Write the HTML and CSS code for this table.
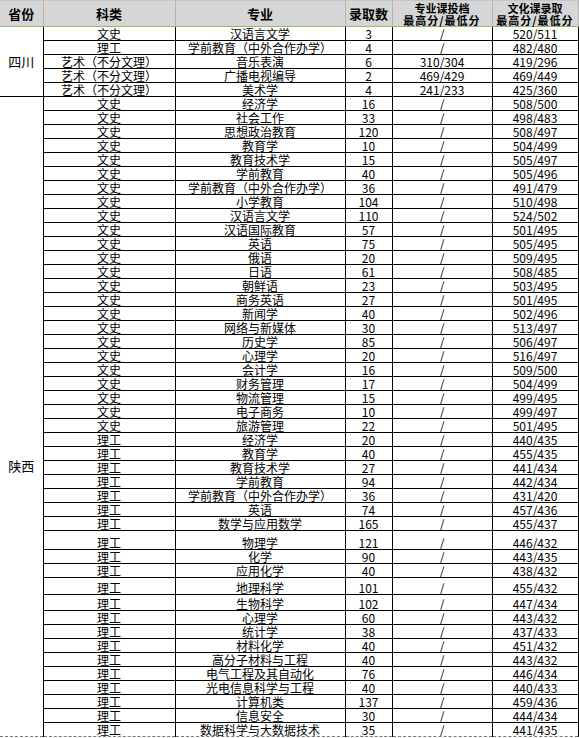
FILE: index.html
```html
<!DOCTYPE html>
<html lang="zh-CN">
<head>
<meta charset="utf-8">
<title>录取分数</title>
<link rel="stylesheet" href="styles.css">
</head>
<body>
<table class="sheet">
<colgroup>
<col class="w-prov"><col class="w-type"><col class="w-major"><col class="w-num"><col class="w-pro"><col class="w-cul">
</colgroup>
<thead>
<tr>
<th>省份</th><th>科类</th><th>专业</th><th>录取数</th>
<th class="two"><span>专业课投档</span><span class="wide">最高分/最低分</span></th>
<th class="two"><span>文化课录取</span><span class="wide">最高分/最低分</span></th>
</tr>
</thead>
<tbody>
<tr><td class="prov" rowspan="5">四川</td><td>文史</td><td>汉语言文学</td><td>3</td><td>/</td><td>520/511</td></tr>
<tr><td>理工</td><td>学前教育（中外合作办学）</td><td>4</td><td>/</td><td>482/480</td></tr>
<tr><td>艺术（不分文理）</td><td>音乐表演</td><td>6</td><td>310/304</td><td>419/296</td></tr>
<tr><td>艺术（不分文理）</td><td>广播电视编导</td><td>2</td><td>469/429</td><td>469/449</td></tr>
<tr><td>艺术（不分文理）</td><td>美术学</td><td>4</td><td>241/233</td><td>425/360</td></tr>
<tr><td class="prov prov-low" rowspan="45">陕西</td><td>文史</td><td>经济学</td><td>16</td><td>/</td><td>508/500</td></tr>
<tr><td>文史</td><td>社会工作</td><td>33</td><td>/</td><td>498/483</td></tr>
<tr><td>文史</td><td>思想政治教育</td><td>120</td><td>/</td><td>508/497</td></tr>
<tr><td>文史</td><td>教育学</td><td>10</td><td>/</td><td>504/499</td></tr>
<tr><td>文史</td><td>教育技术学</td><td>15</td><td>/</td><td>505/497</td></tr>
<tr><td>文史</td><td>学前教育</td><td>40</td><td>/</td><td>505/496</td></tr>
<tr><td>文史</td><td>学前教育（中外合作办学）</td><td>36</td><td>/</td><td>491/479</td></tr>
<tr><td>文史</td><td>小学教育</td><td>104</td><td>/</td><td>510/498</td></tr>
<tr><td>文史</td><td>汉语言文学</td><td>110</td><td>/</td><td>524/502</td></tr>
<tr><td>文史</td><td>汉语国际教育</td><td>57</td><td>/</td><td>501/495</td></tr>
<tr><td>文史</td><td>英语</td><td>75</td><td>/</td><td>505/495</td></tr>
<tr><td>文史</td><td>俄语</td><td>20</td><td>/</td><td>509/495</td></tr>
<tr><td>文史</td><td>日语</td><td>61</td><td>/</td><td>508/485</td></tr>
<tr><td>文史</td><td>朝鲜语</td><td>23</td><td>/</td><td>503/495</td></tr>
<tr><td>文史</td><td>商务英语</td><td>27</td><td>/</td><td>501/495</td></tr>
<tr><td>文史</td><td>新闻学</td><td>40</td><td>/</td><td>502/496</td></tr>
<tr><td>文史</td><td>网络与新媒体</td><td>30</td><td>/</td><td>513/497</td></tr>
<tr><td>文史</td><td>历史学</td><td>85</td><td>/</td><td>506/497</td></tr>
<tr><td>文史</td><td>心理学</td><td>20</td><td>/</td><td>516/497</td></tr>
<tr><td>文史</td><td>会计学</td><td>16</td><td>/</td><td>509/500</td></tr>
<tr><td>文史</td><td>财务管理</td><td>17</td><td>/</td><td>504/499</td></tr>
<tr><td>文史</td><td>物流管理</td><td>15</td><td>/</td><td>499/495</td></tr>
<tr><td>文史</td><td>电子商务</td><td>10</td><td>/</td><td>499/497</td></tr>
<tr><td>文史</td><td>旅游管理</td><td>22</td><td>/</td><td>501/495</td></tr>
<tr><td>理工</td><td>经济学</td><td>20</td><td>/</td><td>440/435</td></tr>
<tr><td>理工</td><td>教育学</td><td>40</td><td>/</td><td>455/435</td></tr>
<tr><td>理工</td><td>教育技术学</td><td>27</td><td>/</td><td>441/434</td></tr>
<tr><td>理工</td><td>学前教育</td><td>94</td><td>/</td><td>442/434</td></tr>
<tr><td>理工</td><td>学前教育（中外合作办学）</td><td>36</td><td>/</td><td>431/420</td></tr>
<tr><td>理工</td><td>英语</td><td>74</td><td>/</td><td>457/436</td></tr>
<tr><td>理工</td><td>数学与应用数学</td><td>165</td><td>/</td><td>455/437</td></tr>
<tr class="tall-a"><td>理工</td><td>物理学</td><td>121</td><td>/</td><td>446/432</td></tr>
<tr><td>理工</td><td>化学</td><td>90</td><td>/</td><td>443/435</td></tr>
<tr><td>理工</td><td>应用化学</td><td>40</td><td>/</td><td>438/432</td></tr>
<tr class="tall-b"><td>理工</td><td>地理科学</td><td>101</td><td>/</td><td>455/432</td></tr>
<tr class="tall-c"><td>理工</td><td>生物科学</td><td>102</td><td>/</td><td>447/434</td></tr>
<tr><td>理工</td><td>心理学</td><td>60</td><td>/</td><td>443/432</td></tr>
<tr><td>理工</td><td>统计学</td><td>38</td><td>/</td><td>437/433</td></tr>
<tr><td>理工</td><td>材料化学</td><td>40</td><td>/</td><td>451/432</td></tr>
<tr><td>理工</td><td>高分子材料与工程</td><td>40</td><td>/</td><td>443/432</td></tr>
<tr><td>理工</td><td>电气工程及其自动化</td><td>76</td><td>/</td><td>446/434</td></tr>
<tr><td>理工</td><td>光电信息科学与工程</td><td>40</td><td>/</td><td>440/433</td></tr>
<tr><td>理工</td><td>计算机类</td><td>137</td><td>/</td><td>459/436</td></tr>
<tr><td>理工</td><td>信息安全</td><td>30</td><td>/</td><td>444/434</td></tr>
<tr class="last"><td>理工</td><td>数据科学与大数据技术</td><td>35</td><td>/</td><td>441/435</td></tr>
</tbody>
</table>
</body>
</html>
```

FILE: styles.css
```css
html, body {
  margin: 0;
  padding: 0;
  background: #ffffff;
}

body {
  font-family: "Noto Sans CJK SC", "Noto Sans", sans-serif;
  color: #000000;
}

.sheet {
  border-collapse: collapse;
  table-layout: fixed;
  width: 578px;
  font-size: 12px;
}

.w-prov { width: 43px; }
.w-type { width: 132px; }
.w-major { width: 170px; }
.w-num { width: 47px; }
.w-pro { width: 100px; }
.w-cul { width: 86px; }

.sheet th {
  height: 25px;
  padding: 0;
  background: #d6d6d6;
  border-top: 1px solid #c6c6c6;
  border-right: 1px solid #b4b4b4;
  border-bottom: 1px solid #8fbd63;
  font-size: 13px;
  font-weight: bold;
  line-height: 14px;
  text-align: center;
  vertical-align: middle;
  white-space: nowrap;
}

.sheet th.two {
  font-size: 11px;
  line-height: 12px;
}

.sheet th.two span {
  display: block;
}

.sheet th.two span.wide {
  letter-spacing: 1px;
}

.sheet tbody tr {
  height: 14px;
}

.sheet tbody tr.tall-a { height: 19px; }
.sheet tbody tr.tall-b { height: 17px; }
.sheet tbody tr.tall-c { height: 16px; }

.sheet td {
  padding: 0;
  border-right: 1px solid #000000;
  border-bottom: 1px solid #000000;
  line-height: 13px;
  text-align: center;
  vertical-align: bottom;
  white-space: nowrap;
  overflow: hidden;
}

.sheet td.prov {
  font-size: 13px;
  line-height: 16px;
  vertical-align: middle;
}

.sheet td.prov-low {
  vertical-align: top;
  padding-top: 361px;
  border-bottom: 1px dashed #7a7a7a;
}

.sheet tr.last td {
  border-bottom: 1px dashed #7a7a7a;
}
```
